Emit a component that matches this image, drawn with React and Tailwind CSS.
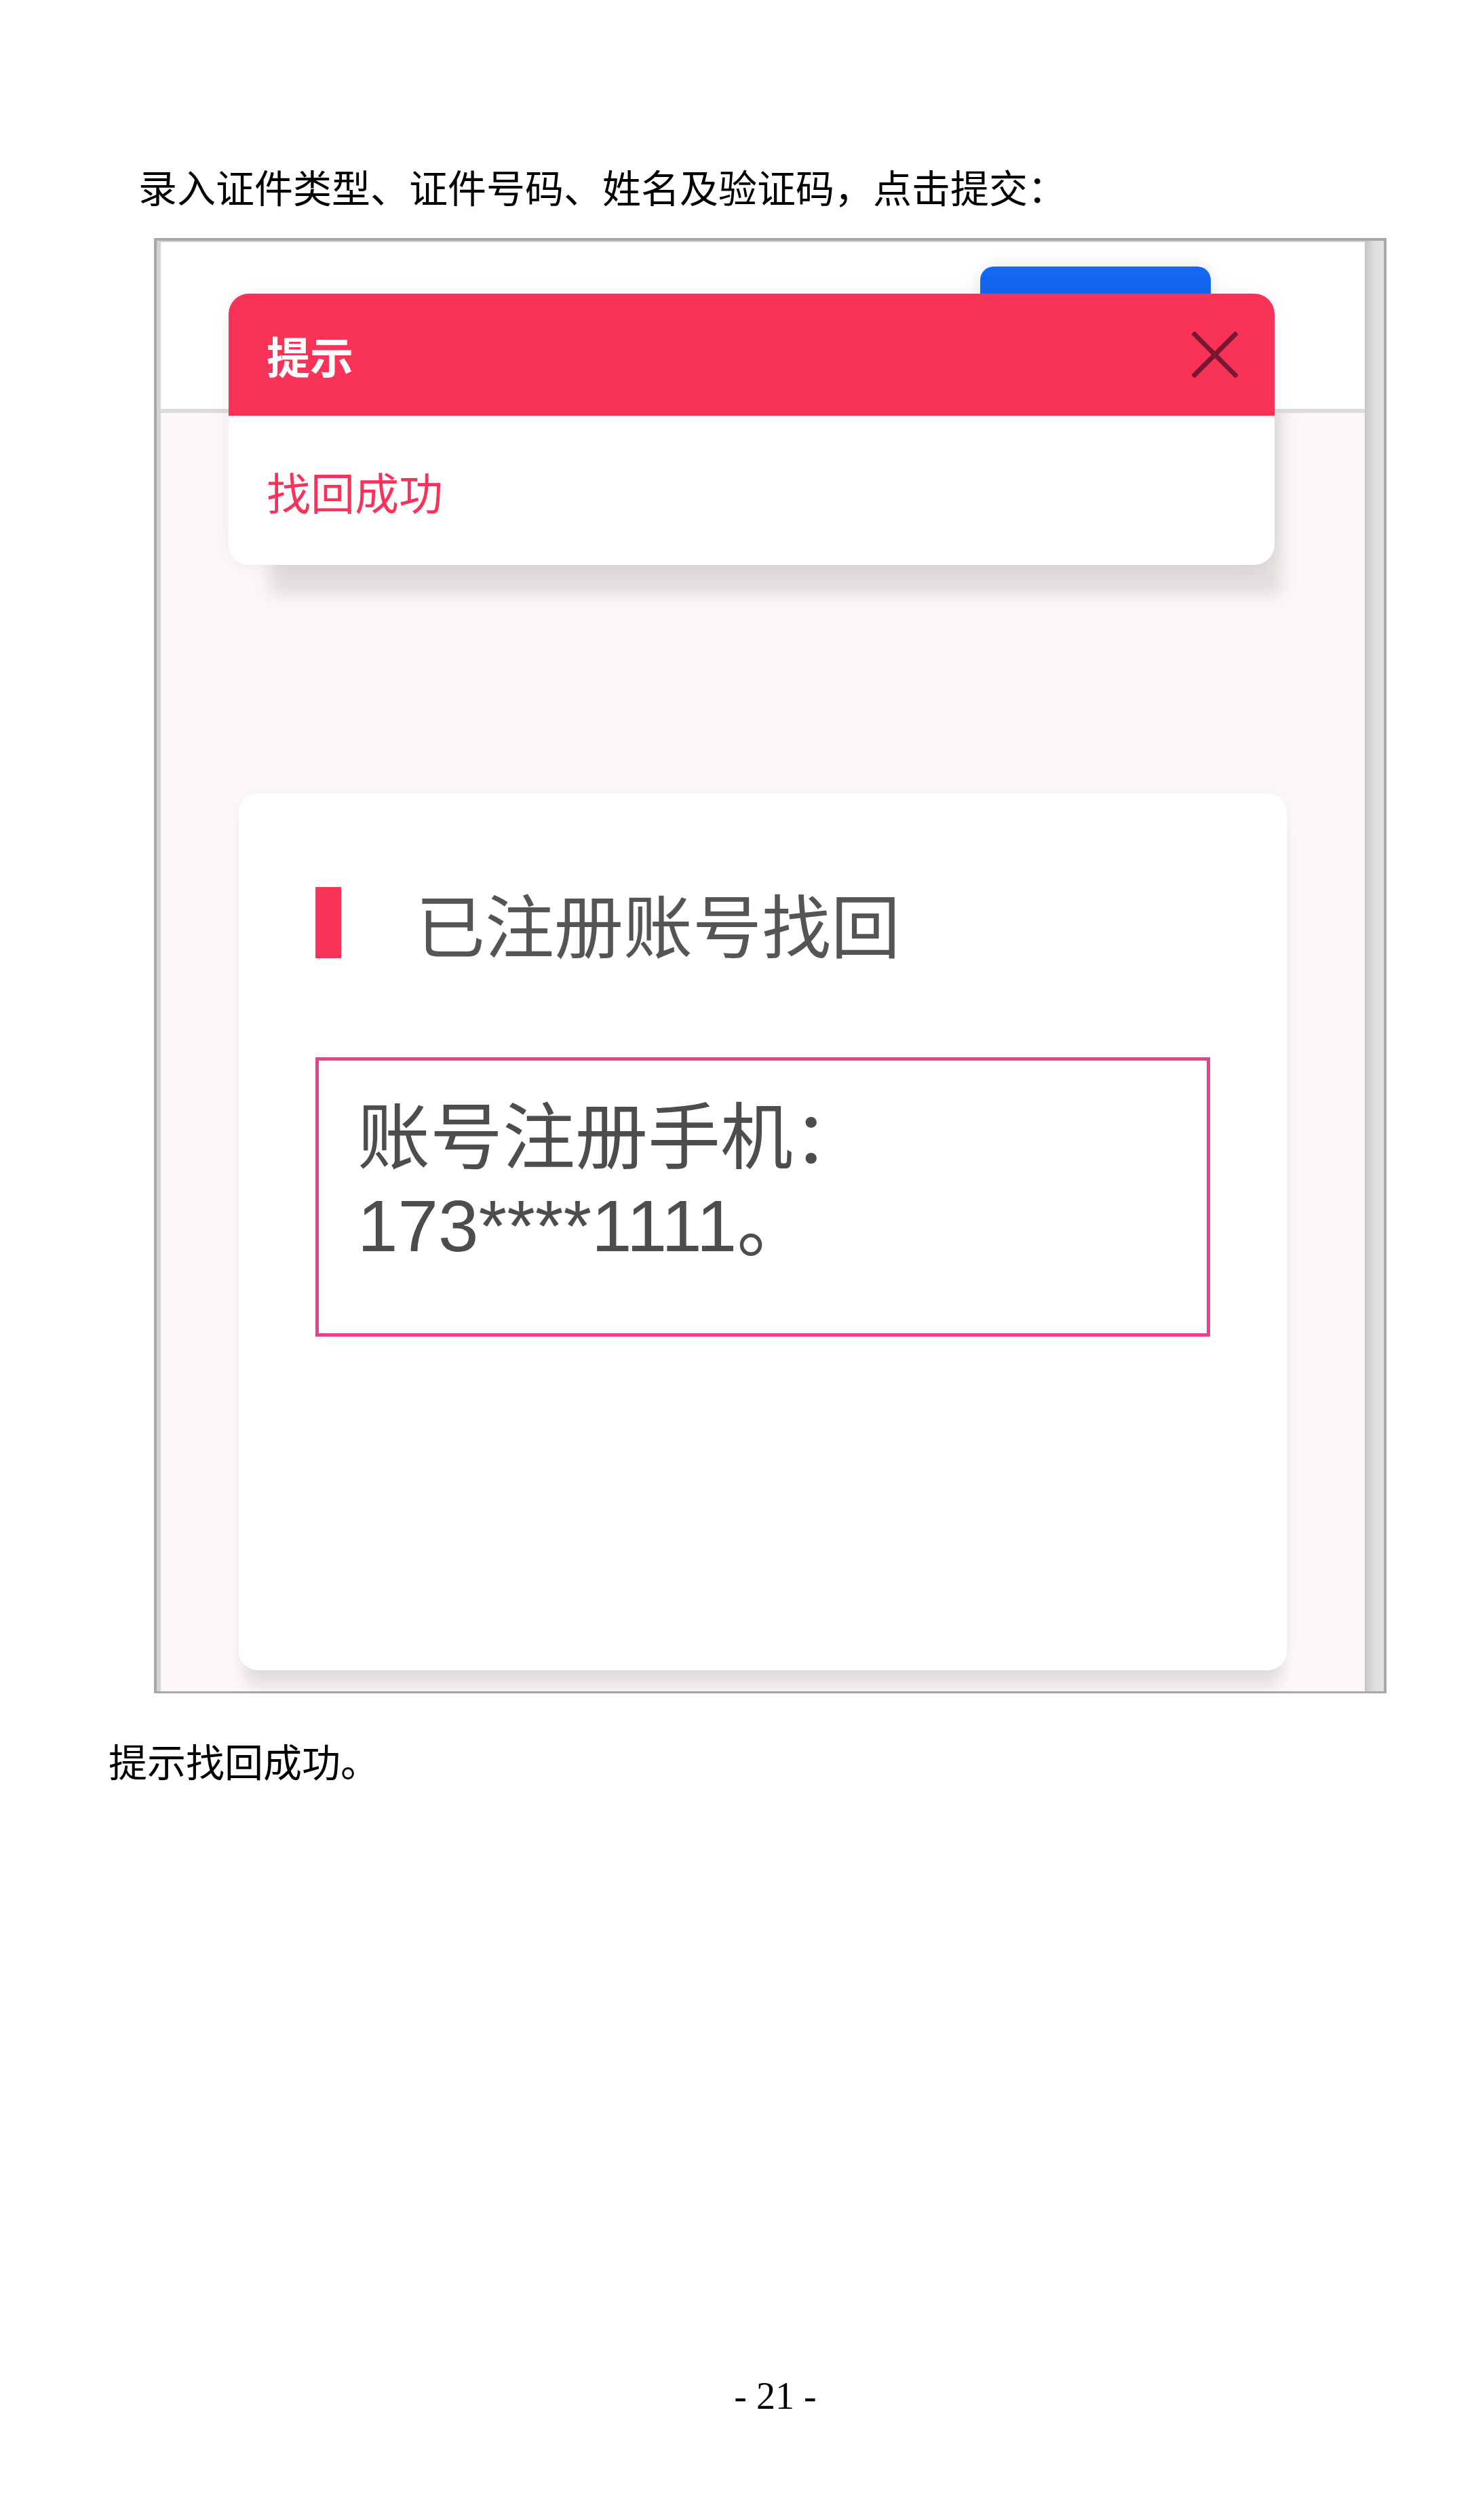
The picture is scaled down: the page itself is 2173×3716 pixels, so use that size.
export default function App() {
  return (
    <div className="w-[2173px] h-[3716px] bg-white text-black font-['Noto_Sans_CJK_SC',sans-serif]">
      <p className="pt-[244px] pl-[204px] text-[57px] leading-[60px] text-black">
        录入证件类型、证件号码、姓名及验证码，点击提交：
      </p>

      <div className="relative ml-[227px] mt-[47px] w-[1817px] h-[2146px] border-t-4 border-l-4 border-r-4 border-b-[3px] border-[#a8a8a8] flex">
        <div className="flex-1 min-w-0 flex flex-col border-l-[6px] border-t-2 border-[#d4d4d4]">
          <div className="relative z-10 h-[252px] shrink-0 bg-white border-b-[6px] border-[#dcdcdc]">
            <div className="ml-[1208px] mt-[36px] w-[340px] h-[120px] rounded-[20px] bg-[#1467f0] shadow-[0_0_24px_rgba(0,0,0,0.1)]"></div>
          </div>
          <div className="relative flex-1 bg-[#fcf8f7]">
            <div className="absolute left-[160px] top-[-20px] w-[1492px] h-[288px] bg-[#e1dddc] blur-[12px]"></div>
            <div className="relative ml-[115px] mt-[561px] w-[1545px] h-[1293px] bg-white rounded-[28px] pt-[138px] px-[113px] shadow-[0_32px_20px_-8px_rgba(80,60,60,0.13),0_0_24px_rgba(0,0,0,0.03)]">
              <div className="flex items-start">
                <div className="w-[38px] h-[105px] bg-[#f93257] shrink-0"></div>
                <div className="ml-[110px] text-[102px] leading-[105px] text-[#555555]">
                  已注册账号找回
                </div>
              </div>
              <div className="mt-[146px] h-[412px] border-[5px] border-[#e8408c] pt-[49px] pl-[57px] text-[107px] leading-[130px] text-[#4d4d4d] font-['Liberation_Sans','Noto_Sans_CJK_SC',sans-serif]">
                <div>账号注册手机：</div>
                <div>173****1111。</div>
              </div>
            </div>
          </div>
        </div>
        <div className="w-[28px] shrink-0 bg-gradient-to-r from-[#c6c6c6] via-[#dedede] to-[#e4e4e4]"></div>

        <div className="absolute z-20 left-[106px] top-[78px] w-[1542px] h-[400px] rounded-[30px] overflow-hidden bg-white shadow-[0_0_30px_rgba(0,0,0,0.06)]">
          <div className="h-[180px] bg-[#f93257] flex items-center justify-between pl-[56px] pr-[54px]">
            <span className="text-[64px] leading-none text-white font-semibold">提示</span>
            <svg width="68" height="68" viewBox="0 0 68 68" className="block">
              <path d="M4 4 L64 64 M64 4 L4 64" stroke="#7b1631" strokeWidth="7" strokeLinecap="square" fill="none" />
            </svg>
          </div>
          <div className="h-[220px] border-t-[3px] border-[#f3f1f1] flex items-center pl-[56px]">
            <span className="text-[65px] leading-none text-[#f7335b]">找回成功</span>
          </div>
        </div>
      </div>

      <p className="mt-[68px] pl-[160px] text-[57px] leading-[60px] text-black">提示找回成功。</p>

      <p className="mt-[878px] pl-[113px] text-center text-[56px] leading-[60px] text-black font-['Liberation_Serif',serif]">
        - 21 -
      </p>
    </div>
  );
}
